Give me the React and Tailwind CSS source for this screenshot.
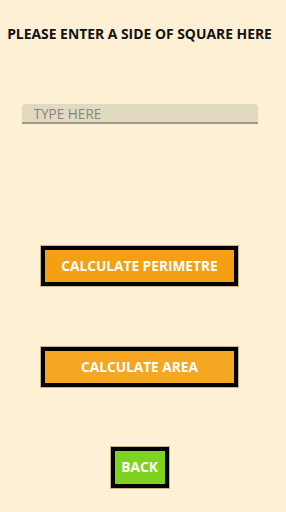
import React from 'react';

export default function App() {
  return (
    <div className="w-[286px] h-[512px] bg-[#fef0d4] font-['Open_Sans',sans-serif] overflow-hidden">
      <div className="w-[279px] flex flex-col items-center">
        <h1 className="mt-[24px] text-[13.9px] leading-[19px] font-bold text-[#111] whitespace-nowrap">
          PLEASE ENTER A SIDE OF SQUARE HERE
        </h1>

        <input
          type="text"
          placeholder="TYPE HERE"
          className="mt-[61px] w-[236px] h-[20px] bg-[#e2d9c1] rounded-t-[3px] border-b-2 border-[#9f978c] px-[12px] pt-[2px] text-[13.6px] text-[#555] placeholder:text-[#8a857c] outline-none"
        />

        <button className="mt-[122px] w-[197px] h-[40px] bg-[#f59f14] border-[4px] border-black outline outline-1 outline-[#c9b48e] text-white font-bold text-[13.7px]">
          CALCULATE PERIMETRE
        </button>

        <button className="mt-[61px] w-[197px] h-[40px] bg-[#f5a623] border-[4px] border-black outline outline-1 outline-[#c9b48e] text-white font-bold text-[13.7px]">
          CALCULATE AREA
        </button>

        <button className="mt-[60px] w-[58px] h-[41px] bg-[#7ed321] border-[4px] border-black outline outline-1 outline-[#c9b48e] text-white font-bold text-[13.7px]">
          BACK
        </button>
      </div>
    </div>
  );
}
